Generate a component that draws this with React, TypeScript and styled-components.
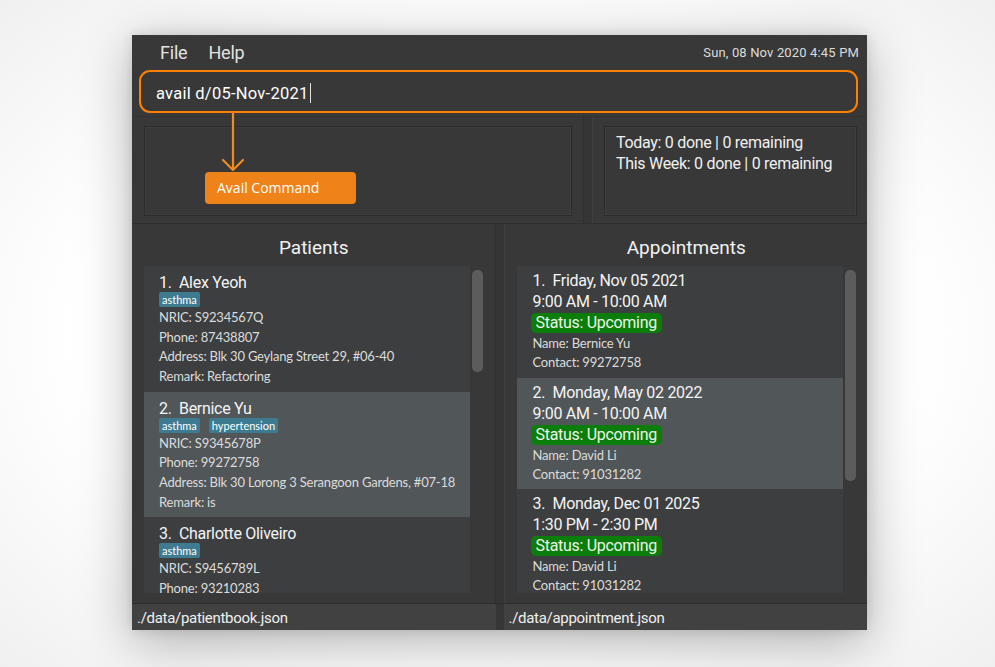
import styled, { createGlobalStyle } from "styled-components";

const GlobalStyle = createGlobalStyle`
  html, body {
    margin: 0;
    padding: 0;
    background: #ffffff;
  }
`;

type Patient = {
  name: string;
  tags: string[];
  nric: string;
  phone: string;
  address: string;
  remark: string;
};

type Appointment = {
  date: string;
  time: string;
  name: string;
  contact: string;
};

const patients: Patient[] = [
  {
    name: "Alex Yeoh",
    tags: ["asthma"],
    nric: "S9234567Q",
    phone: "87438807",
    address: "Blk 30 Geylang Street 29, #06-40",
    remark: "Refactoring",
  },
  {
    name: "Bernice Yu",
    tags: ["asthma", "hypertension"],
    nric: "S9345678P",
    phone: "99272758",
    address: "Blk 30 Lorong 3 Serangoon Gardens, #07-18",
    remark: "is",
  },
  {
    name: "Charlotte Oliveiro",
    tags: ["asthma"],
    nric: "S9456789L",
    phone: "93210283",
    address: "",
    remark: "",
  },
];

const appointments: Appointment[] = [
  {
    date: "Friday, Nov 05 2021",
    time: "9:00 AM - 10:00 AM",
    name: "Bernice Yu",
    contact: "99272758",
  },
  {
    date: "Monday, May 02 2022",
    time: "9:00 AM - 10:00 AM",
    name: "David Li",
    contact: "91031282",
  },
  {
    date: "Monday, Dec 01 2025",
    time: "1:30 PM - 2:30 PM",
    name: "David Li",
    contact: "91031282",
  },
];

export default function App() {
  return (
    <>
      <GlobalStyle />
      <Stage>
        <Window>
          <MenuBar>
            <MenuItem>File</MenuItem>
            <MenuItem>Help</MenuItem>
            <Clock>Sun, 08 Nov 2020 4:45 PM</Clock>
          </MenuBar>

          <CommandBox>
            <CommandText>avail d/05-Nov-2021</CommandText>
            <Caret />
          </CommandBox>

          <ResultRow>
            <ResultPane>
              <ResultBox />
            </ResultPane>
            <Splitter />
            <ResultPane $narrow>
              <ResultBox>
                <StatLine>Today: 0 done | 0 remaining</StatLine>
                <StatLine>This Week: 0 done | 0 remaining</StatLine>
              </ResultBox>
            </ResultPane>
          </ResultRow>

          <ListsRow>
            <ListPanel>
              <PanelTitle>Patients</PanelTitle>
              <ListBody>
                <ListView>
                  {patients.map((p, i) => (
                    <PatientCell key={p.name} $selected={i === 1}>
                      <CellName>
                        {i + 1}.&nbsp;&nbsp;{p.name}
                      </CellName>
                      <TagRow>
                        {p.tags.map((t) => (
                          <Tag key={t}>{t}</Tag>
                        ))}
                      </TagRow>
                      <Detail>NRIC: {p.nric}</Detail>
                      <Detail>Phone: {p.phone}</Detail>
                      {p.address && <Detail>Address: {p.address}</Detail>}
                      {p.remark && <Detail>Remark: {p.remark}</Detail>}
                    </PatientCell>
                  ))}
                </ListView>
                <ScrollThumb style={{ height: 102 }} />
              </ListBody>
            </ListPanel>
            <Splitter />
            <ListPanel>
              <PanelTitle>Appointments</PanelTitle>
              <ListBody>
                <ListView>
                  {appointments.map((a, i) => (
                    <AppointmentCell key={a.date} $selected={i === 1}>
                      <CellName>
                        {i + 1}.&nbsp;&nbsp;{a.date}
                      </CellName>
                      <TimeLine>{a.time}</TimeLine>
                      <StatusPill>Status: Upcoming</StatusPill>
                      <ApptDetail>Name: {a.name}</ApptDetail>
                      <ApptDetail>Contact: {a.contact}</ApptDetail>
                    </AppointmentCell>
                  ))}
                </ListView>
                <ScrollThumb style={{ height: 211 }} />
              </ListBody>
            </ListPanel>
          </ListsRow>

          <StatusRow>
            <StatusCell>./data/patientbook.json</StatusCell>
            <StatusGap />
            <StatusCell>./data/appointment.json</StatusCell>
          </StatusRow>

          <Callout>
            <ArrowSvg width="30" height="62" viewBox="0 0 30 62">
              <path
                d="M15 0 L15 57 M5 47 L15 57 L25 47"
                fill="none"
                stroke="#f28a1e"
                strokeWidth="2.2"
                strokeLinecap="round"
                strokeLinejoin="round"
              />
            </ArrowSvg>
            <CalloutLabel>Avail Command</CalloutLabel>
          </Callout>
        </Window>
      </Stage>
    </>
  );
}

const Stage = styled.div`
  width: 995px;
  height: 667px;
  padding: 35px 0 0 132px;
  box-sizing: border-box;
  background: radial-gradient(ellipse at center, #ffffff 60%, #f0f0f0 100%);
`;

const Window = styled.div`
  position: relative;
  width: 735px;
  height: 595px;
  background: #383838;
  display: flex;
  flex-direction: column;
  box-shadow: 0 12px 50px rgba(0, 0, 0, 0.3), 0 0 12px rgba(0, 0, 0, 0.12);
  font-family: Roboto, "Liberation Sans", sans-serif;
  color: #ececec;
  overflow: hidden;
`;

const MenuBar = styled.div`
  height: 35px;
  display: flex;
  align-items: center;
  padding: 0 8px 0 28px;
  gap: 21px;
  box-sizing: border-box;
`;

const MenuItem = styled.span`
  font-size: 18px;
  color: #e2e2e2;
  letter-spacing: -0.2px;
`;

const Clock = styled.span`
  margin-left: auto;
  font-size: 13px;
  color: #dcdcdc;
  letter-spacing: 0.15px;
`;

const CommandBox = styled.div`
  margin: 0 9px 0 7px;
  height: 43px;
  border: 2.5px solid #ff8000;
  border-radius: 11px;
  box-sizing: border-box;
  display: flex;
  align-items: center;
  padding: 3px 0 0 15px;
`;

const CommandText = styled.span`
  font-size: 16.5px;
  color: #ffffff;
  letter-spacing: 0.25px;
`;

const Caret = styled.span`
  display: inline-block;
  width: 1px;
  height: 20px;
  background: #e0e0e0;
  margin-left: 1px;
`;

const ResultRow = styled.div`
  margin-top: 3px;
  height: 108px;
  display: flex;
  border-top: 1px solid #333333;
  border-bottom: 1px solid #2f2f2f;
  box-sizing: border-box;
`;

const ResultPane = styled.div<{ $narrow?: boolean }>`
  width: ${(p) => (p.$narrow ? "274px" : "451px")};
  padding: 9px ${(p) => (p.$narrow ? "10px" : "11px")} 7px
    ${(p) => (p.$narrow ? "11px" : "12px")};
  box-sizing: border-box;
  display: flex;
`;

const ResultBox = styled.div`
  flex: 1;
  border: 1px solid #2c2c2c;
  box-shadow: inset 0 0 0 1px #3e3e3e;
  padding: 5px 11px;
  display: flex;
  flex-direction: column;
`;

const StatLine = styled.div`
  font-size: 16px;
  line-height: 21px;
  color: #f0f0f0;
  letter-spacing: -0.3px;
`;

const Splitter = styled.div`
  width: 10px;
  flex: none;
  background: #353535;
  border-left: 1px solid #2f2f2f;
  border-right: 1px solid #3f3f3f;
  box-sizing: border-box;
`;

const ListsRow = styled.div`
  height: 379px;
  display: flex;
`;

const ListPanel = styled.div`
  flex: 1;
  display: flex;
  flex-direction: column;
  padding: 0 11px 10px 12px;
  box-sizing: border-box;
`;

const PanelTitle = styled.div`
  height: 42px;
  display: flex;
  align-items: center;
  justify-content: center;
  font-size: 19px;
  color: #f2f2f2;
  padding-top: 5px;
  box-sizing: border-box;
`;

const ListBody = styled.div`
  flex: 1;
  display: flex;
  gap: 2px;
  min-height: 0;
`;

const ListView = styled.div`
  width: 326px;
  overflow: hidden;
  display: flex;
  flex-direction: column;
  background: #3c3e3f;
`;

const ScrollThumb = styled.div`
  width: 11px;
  margin-top: 4px;
  border-radius: 5px;
  background: #5c5c5c;
`;

const PatientCell = styled.div<{ $selected?: boolean }>`
  flex: none;
  height: 125.5px;
  padding: 7px 10px 0 15px;
  box-sizing: border-box;
  background: ${(p) => (p.$selected ? "#515658" : "#3c3e3f")};
`;

const AppointmentCell = styled.div<{ $selected?: boolean }>`
  flex: none;
  height: 111.5px;
  padding: 5px 10px 0 16px;
  box-sizing: border-box;
  background: ${(p) => (p.$selected ? "#515658" : "#3c3e3f")};
`;

const CellName = styled.div`
  font-size: 16px;
  line-height: 20px;
  color: #f4f4f4;
  letter-spacing: -0.3px;
  white-space: nowrap;
`;

const TimeLine = styled(CellName)`
  line-height: 21px;
`;

const TagRow = styled.div`
  display: flex;
  gap: 9px;
  margin-top: -1px;
  height: 16px;
  align-items: flex-start;
`;

const Tag = styled.span`
  background: #3e7b91;
  color: #ffffff;
  font-family: Lato, "Open Sans", sans-serif;
  font-size: 11px;
  line-height: 15px;
  padding: 0 3px;
  border-radius: 2px;
`;

const Detail = styled.div`
  font-family: Lato, "Open Sans", sans-serif;
  font-size: 13px;
  line-height: 19.7px;
  color: #dcdcdc;
  letter-spacing: -0.2px;
  white-space: nowrap;
`;

const ApptDetail = styled(Detail)`
  line-height: 19.3px;
`;

const StatusPill = styled.div`
  align-self: flex-start;
  display: inline-block;
  margin: 1px 0 1px -2px;
  padding: 0 5px 0 5px;
  height: 20px;
  line-height: 20px;
  font-size: 16px;
  letter-spacing: -0.3px;
  color: #e8f5e8;
  background: #0b7d0b;
  border-radius: 5px;
`;

const StatusRow = styled.div`
  height: 27px;
  display: flex;
  border-top: 1px solid #2c2c2c;
  box-sizing: border-box;
`;

const StatusCell = styled.div`
  flex: 1;
  background: #414141;
  font-size: 15px;
  color: #f0f0f0;
  display: flex;
  align-items: center;
  padding: 2px 0 0 5px;
  letter-spacing: -0.3px;
`;

const StatusGap = styled.div`
  width: 8px;
  background: #363636;
`;

const Callout = styled.div`
  position: absolute;
  left: 73px;
  top: 78px;
  display: flex;
  flex-direction: column;
  align-items: flex-start;
`;

const ArrowSvg = styled.svg`
  display: block;
  margin-left: 13px;
`;

const CalloutLabel = styled.div`
  margin-top: -3px;
  width: 151px;
  height: 32px;
  box-sizing: border-box;
  background: #ef8219;
  border-radius: 4px;
  color: #ffffff;
  font-family: "Open Sans", sans-serif;
  font-size: 14px;
  display: flex;
  align-items: center;
  padding: 0 0 2px 12px;
`;
